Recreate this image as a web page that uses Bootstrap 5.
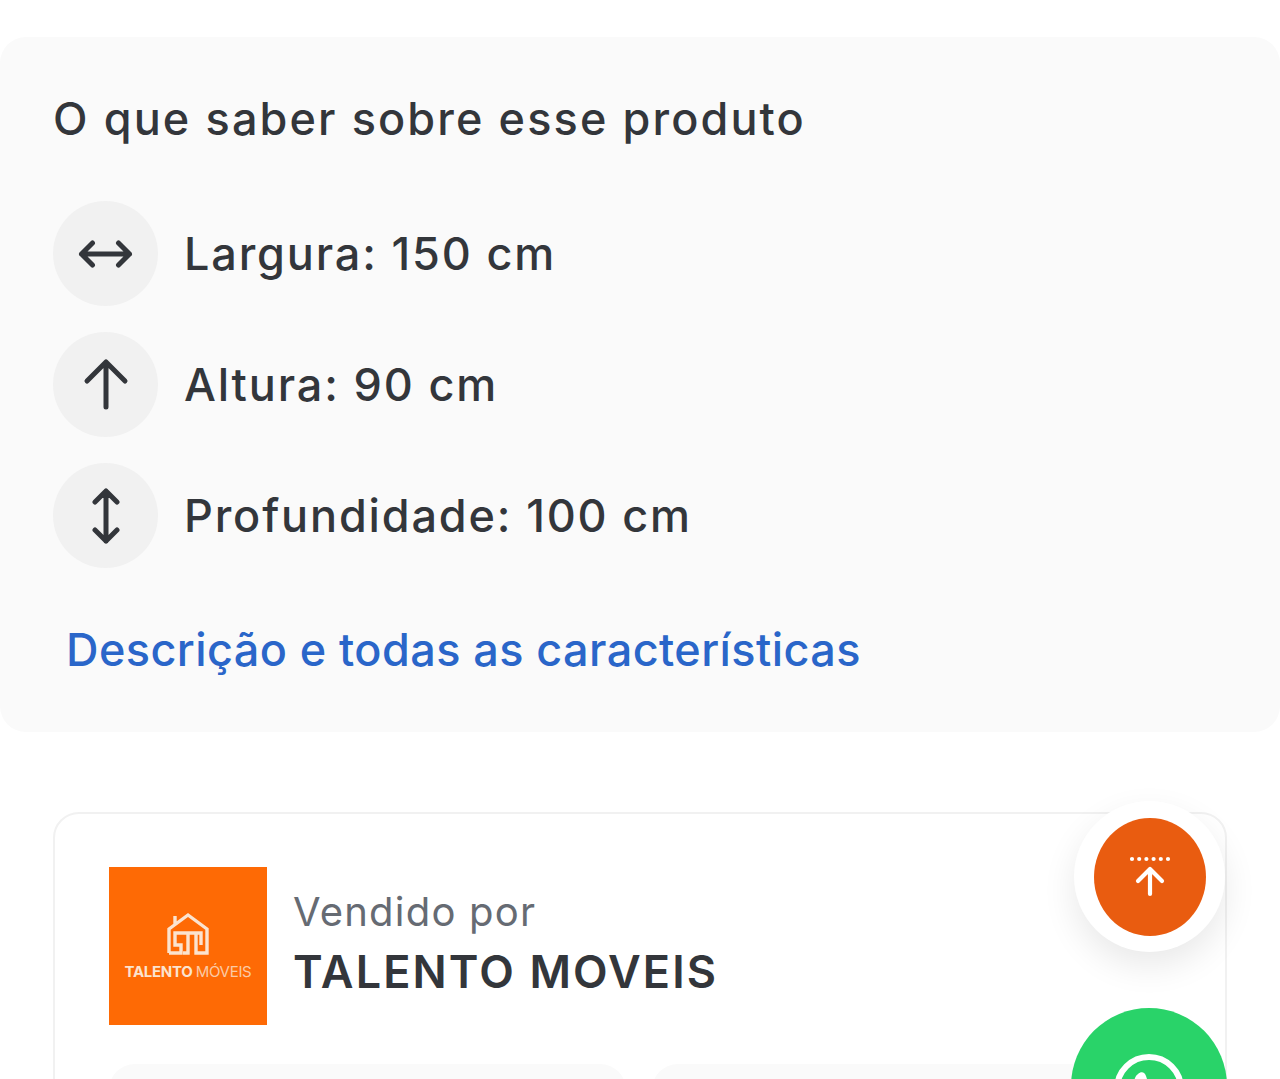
<!DOCTYPE html>
<html lang="pt-BR">
<head>
    <meta charset="UTF-8">
    <meta name="viewport" content="width=device-width, initial-scale=1.0">
    <title>Produto - Talento Moveis</title>
    <link href="https://cdn.jsdelivr.net/npm/bootstrap@5.3.0/dist/css/bootstrap.min.css" rel="stylesheet">
    <style>
        html, body { height: 100%; overflow: hidden; }
        body { background: #fff; font-family: Inter, "Liberation Sans", sans-serif; color: #33363b; padding-top: 37px; }
        .about-panel { background: #fafafa; border-radius: 26px; height: 695px; padding: 54px 53px 0; }
        .about-title { font-size: 45px; line-height: 56px; font-weight: 450; letter-spacing: 2.12px; margin: 0 0 54px; }
        .spec-list { gap: 26px; }
        .spec-icon { width: 105px; height: 105px; background: #f1f1f1; flex: none; }
        .spec-text { font-size: 45px; font-weight: 450; letter-spacing: 1.85px; margin-left: 26px; }
        .spec-link { display: block; margin: 54px 0 0 13px; font-size: 45px; font-weight: 450; line-height: 56px; color: #2a66c9; text-decoration: none; letter-spacing: .42px; }
        .seller-card { margin: 80px 53px 0; height: 400px; border: 2px solid #f1f1f1; border-radius: 26px; padding: 53px 54px; background: #fff; }
        .seller-logo { width: 158px; height: 158px; background: #fe6a05; flex: none; color: #fbe3cf; }
        .logo-name { font-size: 15px; font-weight: 700; line-height: 16px; white-space: nowrap; letter-spacing: -.3px; }
        .logo-name span { font-weight: 400; opacity: .8; }
        .seller-text { margin-left: 26px; }
        .seller-label { font-size: 40px; line-height: 46px; color: #666b73; letter-spacing: 1.2px; margin-top: -4px; }
        .seller-name { font-size: 45px; line-height: 54px; font-weight: 600; letter-spacing: 2.1px; margin-top: 10px; }
        .seller-tiles { gap: 26px; margin-top: 39px; }
        .seller-tile { width: 517px; height: 120px; background: #fafafa; border-radius: 26px; }
        .fab-ring { position: absolute; left: 1074px; top: 801px; width: 151px; height: 151px; background: #fff; box-shadow: 0 14px 34px rgba(0,0,0,.09); }
        .fab-top { width: 112px; height: 118px; background: #e95c10; }
        .fab-chat { position: absolute; left: 1071px; top: 1008px; width: 156px; height: 156px; background: #29d369; }
        .chat-glyph { margin-top: 43px; }
    </style>
</head>
<body>
<section class="about-panel">
    <h2 class="about-title">O que saber sobre esse produto</h2>
    <div class="spec-list d-flex flex-column">
        <div class="d-flex align-items-center">
            <div class="spec-icon rounded-circle d-flex align-items-center justify-content-center">
                <svg width="56" height="56" viewBox="0 0 56 56" fill="none" stroke="#33363b" stroke-width="5" stroke-linecap="round" stroke-linejoin="round"><path d="M3.5 28h48M14.500 17l-11 11 11 11M40.500 17l11 11-11 11"/></svg>
            </div>
            <div class="spec-text">Largura: 150 cm</div>
        </div>
        <div class="d-flex align-items-center">
            <div class="spec-icon rounded-circle d-flex align-items-center justify-content-center">
                <svg width="56" height="56" viewBox="0 0 56 56" fill="none" stroke="#33363b" stroke-width="5" stroke-linecap="round" stroke-linejoin="round"><path d="M28 5v45M9 24 28 5l19 19"/></svg>
            </div>
            <div class="spec-text">Altura: 90 cm</div>
        </div>
        <div class="d-flex align-items-center">
            <div class="spec-icon rounded-circle d-flex align-items-center justify-content-center">
                <svg width="56" height="56" viewBox="0 0 56 56" fill="none" stroke="#33363b" stroke-width="5" stroke-linecap="round" stroke-linejoin="round"><path d="M28 3v50M17 14 28 3l11 11M17 42l11 11 11-11"/></svg>
            </div>
            <div class="spec-text">Profundidade: 100 cm</div>
        </div>
    </div>
    <a class="spec-link" href="#">Descrição e todas as características</a>
</section>

<section class="seller-card">
    <div class="d-flex align-items-center">
        <div class="seller-logo d-flex flex-column align-items-center justify-content-center">
            <svg width="44" height="44" viewBox="0 0 44 44" fill="none" stroke="#fbe3cf" stroke-width="3.4"><path d="M3 41V17L22 3l19 14v24H30V21h-21v12h6v8H3M30 21h5v12M22 21v20h-5M9 4v8"/></svg>
            <div class="logo-name mt-2">TALENTO <span>MÓVEIS</span></div>
        </div>
        <div class="seller-text">
            <div class="seller-label">Vendido por</div>
            <div class="seller-name">TALENTO MOVEIS</div>
        </div>
    </div>
    <div class="seller-tiles d-flex">
        <div class="seller-tile"></div>
        <div class="seller-tile"></div>
    </div>
</section>

<div class="fab-ring rounded-circle d-flex align-items-center justify-content-center">
    <button type="button" class="fab-top rounded-circle border-0 p-0 d-flex align-items-center justify-content-center" aria-label="Voltar ao topo">
        <svg width="44" height="44" viewBox="0 0 44 44" fill="none" stroke="#fff" stroke-linecap="round" stroke-linejoin="round"><path stroke-width="4.2" stroke-dasharray="0 7.2" d="M4 4h36.5"/><path stroke-width="4.2" d="M22 14v25M10 26l12-12 12 12"/></svg>
    </button>
</div>
<button type="button" class="fab-chat rounded-circle border-0 p-0 d-flex justify-content-center" aria-label="WhatsApp">
    <svg class="chat-glyph" width="76" height="76" viewBox="0 0 76 76" fill="none"><circle cx="38" cy="38" r="32" stroke="#fff" stroke-width="6"/><path fill="#fff" d="M27 23c3-3 7-2 8 2l2 6c1 2-3 5-2 7 2 3 5 6 9 8l4-3 8 4c0 6-6 9-12 8-11-2-20-12-21-22 0-4 1-8 4-10z"/></svg>
</button>
</body>
</html>
